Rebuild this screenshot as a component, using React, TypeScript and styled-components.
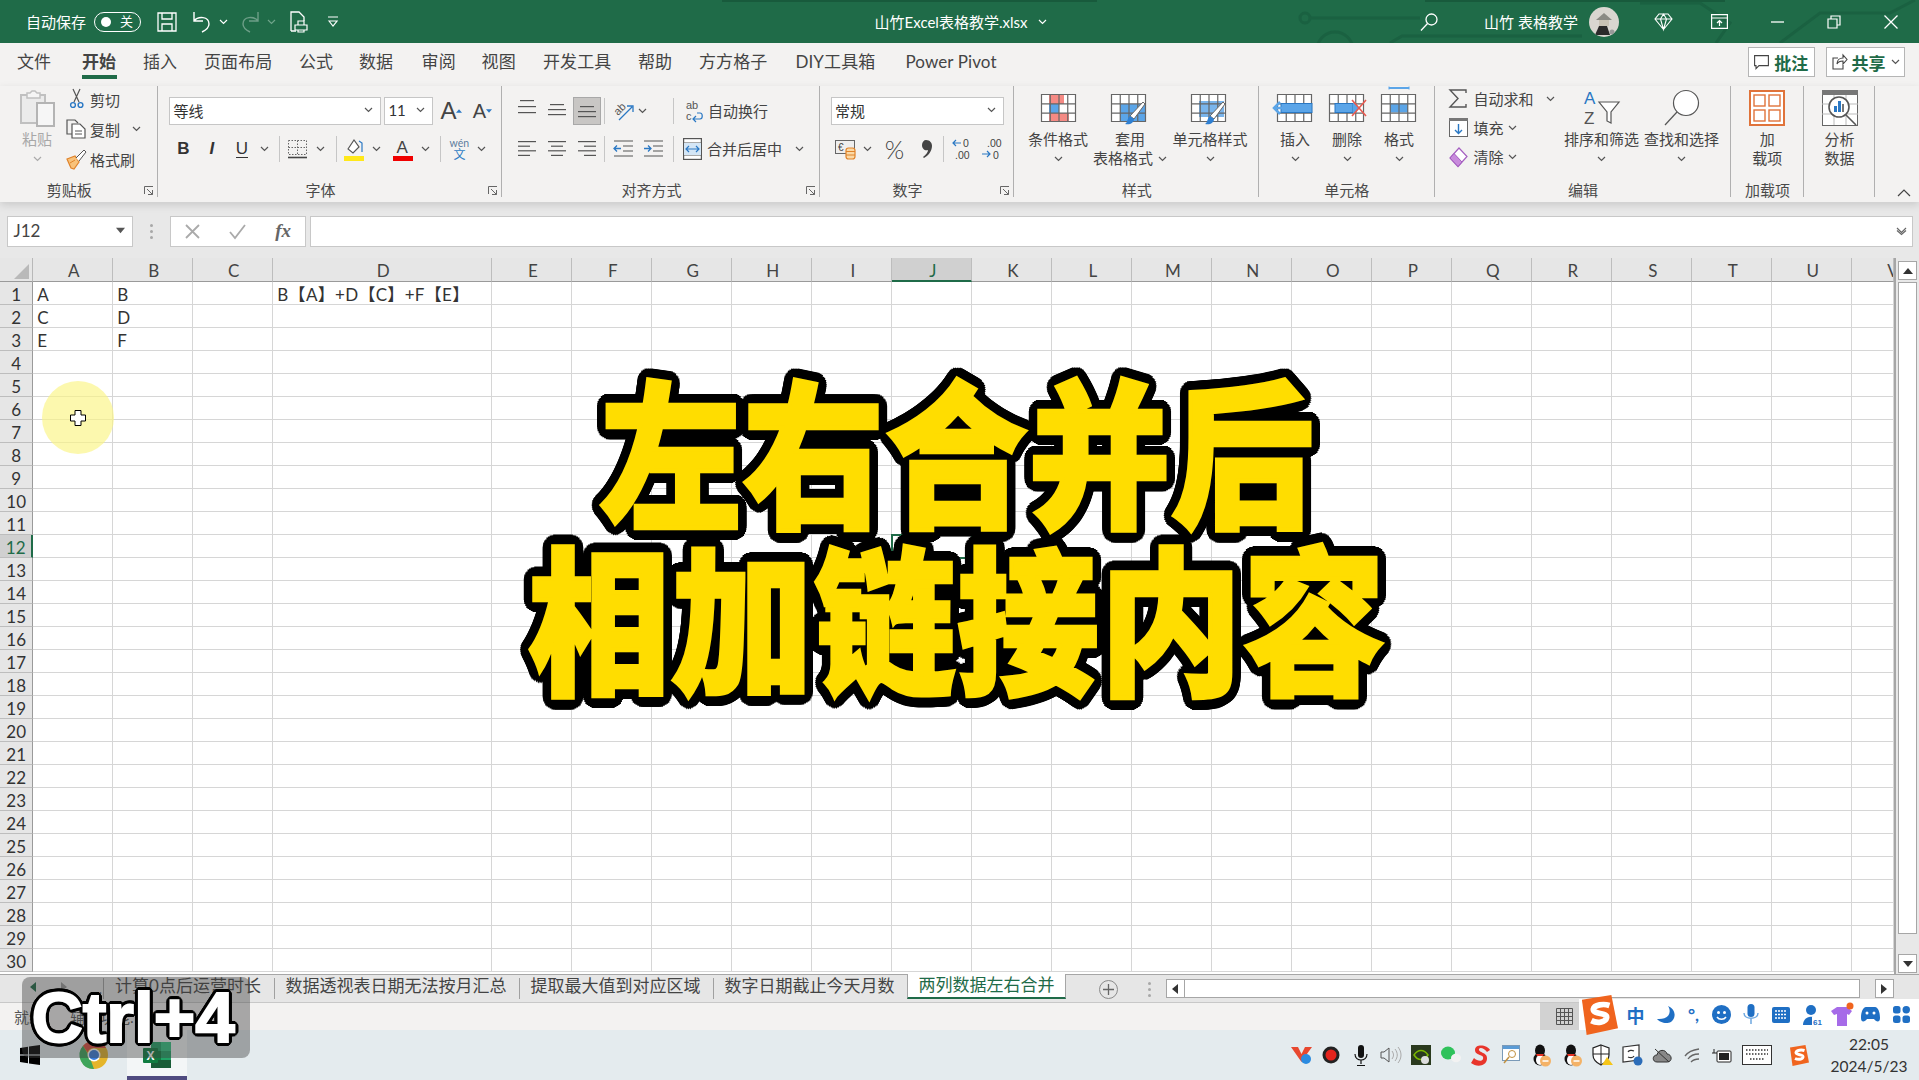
import React from 'react';
import styled, { createGlobalStyle } from 'styled-components';

const Global = createGlobalStyle`
  html, body { margin: 0; padding: 0; background: #fff; }
  * { box-sizing: border-box; }
  body { font-family: Lato, "Noto Sans CJK SC", sans-serif; color: #3c3c3c; overflow: hidden; }
`;

const ring = (r: number, n: number, c: string) =>
  Array.from({ length: n }, (_, i) => {
    const a = (2 * Math.PI * i) / n;
    return `${(r * Math.cos(a)).toFixed(1)}px ${(r * Math.sin(a)).toFixed(1)}px 0 ${c}`;
  }).join(',');
const headOutline = [ring(10.5, 36, '#000'), ring(6, 20, '#000'), ring(3, 12, '#000')].join(',');
const keyOutline = [ring(4, 20, '#000'), ring(2, 10, '#000')].join(',');

const Page = styled.div`
  position: relative; width: 1919px; height: 1080px; overflow: hidden;
  display: flex; flex-direction: column;
`;

/* ---------- shared ---------- */
const Svg = styled.svg`display: block; flex: none; overflow: visible;`;
const Chev = ({ c = '#555' }: { c?: string }) => (
  <Svg width="9" height="6" viewBox="0 0 9 6"><path d="M1 1l3.5 3.5L8 1" fill="none" stroke={c} strokeWidth="1.2" /></Svg>
);
const Place = styled.div<{ $ml?: number; $w?: number }>`
  margin-left: ${p => p.$ml ?? 0}px;
  ${p => (p.$w !== undefined ? `width: ${p.$w}px;` : '')}
  flex: none; display: flex; align-items: center; justify-content: center; white-space: nowrap;
`;

/* ---------- title bar ---------- */
const TitleBar = styled.header`
  position: relative; height: 43px; flex: none; background: #1f6b48; color: #fff;
  display: flex; align-items: center; font-size: 15px;
`;
const Pattern = styled.svg`position: absolute; inset: 0; pointer-events: none;`;
const TitleItem = styled(Place)`position: relative; font-weight: 400;`;
const Toggle = styled.div`
  width: 47px; height: 20px; border: 1.5px solid #fff; border-radius: 10px;
  display: flex; align-items: center; justify-content: space-between; padding: 0 7px 0 6px;
  font-size: 13px; line-height: 1;
`;
const ToggleDot = styled.i`width: 10px; height: 10px; border-radius: 50%; background: #fff;`;
const Avatar = styled.div`width: 30px; height: 30px; border-radius: 50%; background: #d9d6d0; overflow: hidden; display:flex;`;

/* ---------- tabs ---------- */
const TabRow = styled.nav`
  height: 43px; flex: none; background: #f3f2f1; display: flex; align-items: flex-start; padding-left: 17px;
`;
const Tab = styled.div<{ $w: number; $active?: boolean }>`
  position: relative; width: ${p => p.$w}px; height: 38px; line-height: 38px; font-size: 17px; flex: none;
  white-space: nowrap; color: #444; font-weight: ${p => (p.$active ? 700 : 400)}; letter-spacing: .1px;
  ${p => p.$active ? `&::after { content: ''; position: absolute; left: 0; width: 35px; height: 4px; top: 32px; background: #1f6b48; }` : ''}
`;
const TabActions = styled.div`margin-left: auto; display: flex; gap: 11px; padding: 4px 14px 0 0;`;
const ActionButton = styled.div<{ $w: number }>`
  width: ${p => p.$w}px; height: 30px; background: #fff; border: 1px solid #b5b5b5;
  display: flex; align-items: center; justify-content: center; gap: 5px;
  color: #1f6b48; font-weight: 700; font-size: 17px;
`;

/* ---------- ribbon ---------- */
const Ribbon = styled.section`
  position: relative; z-index: 2; height: 116px; flex: none; background: #f3f2f1; display: flex;
  box-shadow: 0 3px 8px rgba(0,0,0,.13);
`;
const Group = styled.div<{ $w: number }>`
  position: relative; width: ${p => p.$w}px; flex: none; display: flex; flex-direction: column;
  &::after { content: ''; position: absolute; right: 0; top: 0; height: 111px; width: 1px; background: #b0b0b0; }
`;
const GroupBody = styled.div<{ $pl: number }>`height: 93px; padding-left: ${p => p.$pl}px; display: flex;`;
const GroupFoot = styled.div`height: 23px; display: flex; align-items: center;`;
const GroupName = styled.div`flex: 1; text-align: center; font-size: 15px; line-height: 23px; color: #4a4a4a; font-weight: 400;`;
const Launcher = styled.div`width: 20px; display: flex; justify-content: flex-end; padding-right: 4px;`;
const ToolStack = styled.div`display: flex; flex-direction: column; gap: 10px; padding-top: 11px;`;
const ToolRow = styled.div`display: flex; align-items: center; height: 28px;`;
const Sep = styled.i<{ $ml?: number }>`
  display: flex; justify-content: center; width: 6px; height: 26px; flex: none; margin-left: ${p => p.$ml ?? 0}px;
  &::after { content: ''; width: 1px; background: #c6c6c6; }
`;
const Select = styled.div<{ $w: number; $ml?: number }>`
  width: ${p => p.$w}px; height: 28px; margin-left: ${p => p.$ml ?? 0}px; background: #fff; border: 1px solid #c6c6c6;
  display: flex; align-items: center; justify-content: space-between; padding: 0 7px 2px 3px; font-size: 15px; color: #333; flex: none; font-weight: 400;
`;
const SmallList = styled.div<{ $ml?: number; $h: number; $wd?: number }>`
  margin-left: ${p => p.$ml ?? 0}px; margin-top: -2px; display: flex; flex-direction: column;
  ${p => (p.$wd ? `width: ${p.$wd}px; flex: none;` : '')}
  & > div { height: ${p => p.$h}px; }
`;
const SmallCmd = styled.div`display: flex; align-items: center; font-size: 15px; color: #444; white-space: nowrap; font-weight: 400;`;
const SmallIcon = styled.div<{ $w: number }>`width: ${p => p.$w}px; flex: none; display: flex; justify-content: flex-start;`;
const BigCmd = styled.div<{ $w: number; $muted?: boolean }>`
  width: ${p => p.$w}px; flex: none; display: flex; flex-direction: column; align-items: center;
  font-size: 15px; line-height: 19px; color: ${p => (p.$muted ? '#a8a8a8' : '#444')}; font-weight: 400;
`;
const BigIcon = styled.div`height: 44px; display: flex; align-items: center; justify-content: center;`;
const BigLine = styled.div`height: 19px; display: flex; align-items: center; gap: 5px; white-space: nowrap;`;
const WrapText = styled(SmallCmd)<{ $ml: number }>`margin-left: ${p => p.$ml}px; padding-bottom: 2px;`;
const Collapse = styled.div`margin: 103px 0 0 22px;`;
const BoldGlyph = styled.span`font-family: "Liberation Sans", sans-serif; font-size: 17px; font-weight: 700; color: #333;`;
const ItalicGlyph = styled(BoldGlyph)`font-style: italic; font-weight: 700;`;
const UnderGlyph = styled(BoldGlyph)`font-weight: 400; border-bottom: 1.5px solid #333; line-height: 17px;`;
const GrowGlyph = styled.span<{ $s: number }>`font-family: "Liberation Sans", sans-serif; font-size: ${p => p.$s}px; color: #444; line-height: 1;`;
const Selected = styled.div`width: 28px; height: 28px; background: #c8c6c4; border: 1px solid #a8a8a8; display: flex; align-items: center; justify-content: center;`;
const Percent = styled.span`font-size: 25px; color: #444; font-weight: 300; line-height: 1;`;
const Ruby = styled.div`display: flex; flex-direction: column; align-items: center; line-height: 11px; font-size: 10.5px; color: #5e7d9e;`;
const RubyHan = styled.span`color: #2d7cc4; font-size: 12px; line-height: 12px;`;

/* ---------- formula bar ---------- */
const FormulaBar = styled.div`
  height: 56px; flex: none; background: #e8e8e8; padding: 13.7px 6px 0 6.5px; display: flex; align-items: flex-start;
`;
const NameBox = styled.div`
  width: 126px; height: 31px; background: #fff; border: 1px solid #c8c8c8; display: flex; align-items: center;
  justify-content: space-between; padding: 0 7px 2px 6px; font-size: 17px; color: #444; font-weight: 400;
`;
const Handle = styled.div`width: 37.5px; height: 31px; display: flex; flex-direction: column; gap: 3px; align-items: center; justify-content: center;
  & i { width: 3px; height: 3px; background: #a8a8a8; border-radius: 50%; }`;
const FxBox = styled.div`
  width: 136px; height: 31px; background: #fff; border: 1px solid #c8c8c8; display: flex; align-items: center; justify-content: space-between; padding: 0 14px 0 14px;
`;
const FxMark = styled.span`font-family: "Liberation Serif", serif; font-style: italic; font-weight: 700; font-size: 19px; color: #666;`;
const FormulaInput = styled.div`
  flex: 1; margin-left: 4px; height: 31px; background: #fff; border: 1px solid #c8c8c8; display: flex; align-items: center; justify-content: flex-end; padding-right: 5px;
`;

/* ---------- sheet ---------- */
const SheetWrap = styled.div`display: flex; height: 716px; flex: none; background: #e8e8e8;`;
const Sheet = styled.div`
  width: 1896px; height: 716px; flex: none; background: #fff; border-right: 2px solid #a6a6a6; overflow: hidden;
  display: grid; grid-template-columns: 33.3px repeat(3, 80px) 219px repeat(17, 80px) 42px;
  grid-template-rows: 23.7px repeat(30, 23px); align-content: start;
`;
const Corner = styled.div`background: #e6e6e6; border-right: 1px solid #b8b8b8; border-bottom: 1px solid #9a9a9a; display: flex; align-items: flex-end; justify-content: flex-end; padding: 0 3px 2px 0;`;
const ColHead = styled.div<{ $sel?: boolean; $clip?: boolean }>`
  background: ${p => (p.$sel ? '#d0d0d0' : '#e6e6e6')};
  border-right: 1px solid #bdbdbd;
  border-bottom: ${p => (p.$sel ? '2px solid #1f6b48' : '1px solid #9a9a9a')};
  display: flex; align-items: center; overflow: hidden; white-space: nowrap;
  justify-content: ${p => (p.$clip ? 'flex-start' : 'center')}; padding: 3px 0 0 ${p => (p.$clip ? 35 : 2)}px;
  font-size: 17px; color: ${p => (p.$sel ? '#1f6b48' : '#444')}; line-height: 1; font-weight: 400;
`;
const RowHead = styled.div<{ $sel?: boolean }>`
  background: ${p => (p.$sel ? '#d0d0d0' : '#e6e6e6')};
  border-right: ${p => (p.$sel ? '2px solid #1f6b48' : '1px solid #9a9a9a')};
  border-bottom: 1px solid #bdbdbd; display: flex; align-items: center; justify-content: center; padding-top: 3px;
  font-size: 17px; color: ${p => (p.$sel ? '#1f6b48' : '#333')}; line-height: 1; font-weight: 400;
`;
const Cell = styled.div<{ $sel?: boolean }>`
  border-right: 1px solid #d6d6d6; border-bottom: 1px solid #d6d6d6; padding-left: 4px;
  font-size: 17px; line-height: 25px; color: #333; white-space: nowrap; font-weight: 400; letter-spacing: .3px;
  ${p => (p.$sel ? 'outline: 2px solid #1f6b48; outline-offset: -1px;' : '')}
`;
const VScroll = styled.div`width: 23px; height: 716px; padding: 3px 2px 0 2px; display: flex; flex-direction: column; align-items: flex-start;`;
const ScrollBtn = styled.div`width: 19px; height: 19px; flex: none; background: #fff; border: 1px solid #a6a6a6; display: flex; align-items: center; justify-content: center;`;
const Thumb = styled.div`width: 19px; height: 652px; margin-top: 2px; flex: none; background: #fff; border: 1px solid #a6a6a6;`;
const DownBtn = styled(ScrollBtn)`margin-top: 20px;`;

/* ---------- sheet tabs ---------- */
const TabBar = styled.div`
  height: 29px; flex: none; background: #e6e6e6; border-top: 1px solid #a6a6a6; border-bottom: 1px solid #c8c8c8;
  display: flex; align-items: flex-start;
`;
const TabNav = styled.div`width: 103px; height: 24px; flex: none; display: flex; align-items: center; padding-left: 28px; gap: 21px; color: #555;`;
const SheetTab = styled.div<{ $w: number; $active?: boolean }>`
  position: relative; width: ${p => p.$w}px; height: ${p => (p.$active ? 25 : 24)}px; flex: none; font-size: 17px; line-height: 21px;
  display: flex; align-items: center; justify-content: center; white-space: nowrap; font-weight: 400; padding-bottom: 3px;
  ${p => p.$active
    ? 'background:#fff;color:#1f6b48;border-bottom:2px solid #1f6b48;border-left:1px solid #a6a6a6;border-right:1px solid #a6a6a6;margin-top:-1px;'
    : 'color:#444; padding-right: 2px;'}
`;
const TabDivider = styled.i`width: 1px; height: 21px; margin-top: 3px; background: #a0a0a0; flex: none;`;
const AddSheet = styled.div`
  width: 19px; height: 19px; margin: 5px 0 0 33px; border: 1.3px solid #8a8a8a; border-radius: 50%; flex: none;
  display: flex; align-items: center; justify-content: center; color: #666;
`;
const BarHandle = styled(Handle)`width: 3px; height: 19px; margin: 5px 0 0 29.5px; flex: none;`;
const HScroll = styled.div`margin: 4px 0 0 15px; display: flex; align-items: stretch; height: 19px; flex: none;`;
const HTrack = styled.div`width: 675px; background: #fff; border: 1px solid #a6a6a6; border-left: 0;`;
const HBtn = styled.div<{ $ml?: number }>`width: 19px; margin-left: ${p => p.$ml ?? 0}px; background: #fff; border: 1px solid #a6a6a6; display: flex; align-items: center; justify-content: center;`;

/* ---------- status + taskbar ---------- */
const StatusBar = styled.div`
  position: relative; height: 27px; flex: none; background: #f3f2f1; display: flex; align-items: center; padding-left: 14px; font-size: 15px; color: #555; font-weight: 400;
`;
const StatusNote = styled.span`margin-left: 26px; display:flex; align-items:center; gap:6px;`;
const ViewCell = styled.div`position: absolute; top: 0; bottom: 0; left: 1540px; width: 50px; background: #d2d2d2; display: flex; align-items: center; padding-left: 16px;`;
const ImeBar = styled.div`
  position: absolute; left: 1579px; right: 0; top: 999px; height: 31px; background: #fff; display: flex; align-items: center; z-index: 3; color: #1f6fc4;
`;
const ImeZh = styled.span`font-size: 18px; font-weight: 700; color: #1f6fc4;`;
const ImeMark = styled.span`font-size: 17px; font-weight: 700; color: #1f6fc4;`;
const Taskbar = styled.footer`flex: 1; background: #e4ebee; display: flex; align-items: center;`;
const ExcelTile = styled.div`width: 60.5px; height: 50px; margin-left: 18.5px; background: #f3f6f7; border-bottom: 4px solid #4f4b80; display: flex; align-items: center; justify-content: center; padding-top: 3px;`;
const Clock = styled.div`margin-left: 23px; width: 74px; display: flex; flex-direction: column; align-items: center; font-size: 15.5px; line-height: 22.5px; color: #333; white-space: nowrap;`;

/* ---------- overlays ---------- */
const Headline = styled.div`
  position: absolute; left: -2px; width: 1919px; top: 354px; z-index: 5; text-align: center;
  font-family: "Noto Sans CJK SC", sans-serif; font-weight: 900; font-size: 141px; line-height: 166px;
  color: #ffdd00; -webkit-text-stroke: 4px #ffdd00; text-shadow: ${headOutline};
  letter-spacing: 2px; pointer-events: none; white-space: nowrap; transform: scaleY(1.12); transform-origin: 50% 0;
`;
const HeadLine2 = styled.div`margin-top: -17px;`;
const KeyHint = styled.div`
  position: absolute; left: 22.4px; top: 976.7px; width: 228px; height: 81px; z-index: 6; border-radius: 8px;
  background: rgba(62,62,62,.42); display: flex; align-items: center; padding-left: 9px;
  font-family: "Liberation Sans", sans-serif; font-weight: 700; font-size: 71px; line-height: 1; color: #fff;
  -webkit-text-stroke: 2px #fff; text-shadow: ${keyOutline};
`;
const Spot = styled.div`
  position: absolute; left: 42px; top: 381px; width: 72px; height: 73px; border-radius: 50%; z-index: 4;
  background: rgba(250,245,130,.65); display: flex; align-items: center; justify-content: center;
`;

/* ---------- icons ---------- */
const Paste = () => (
  <Svg width="35" height="37" viewBox="0 0 35 37">
    <path d="M1 5h24v28H1z" fill="#ebebeb" stroke="#c0c0c0" strokeWidth="2" />
    <path d="M7 8V3h3l2-2h3l2 2h3v5z" fill="#f5f5f5" stroke="#c0c0c0" strokeWidth="1.5" />
    <rect x="17" y="13" width="17" height="23" fill="#f6f6f6" stroke="#b4b4b4" strokeWidth="2" />
  </Svg>
);
const ScissorsI = () => (
  <Svg width="14" height="20" viewBox="0 0 14 20">
    <path d="M3 0l6 13M10 0L4 13" stroke="#555" strokeWidth="1.2" fill="none" />
    <circle cx="3" cy="16" r="2.4" fill="none" stroke="#2a78c4" strokeWidth="1.4" />
    <circle cx="10.5" cy="16" r="2.4" fill="none" stroke="#2a78c4" strokeWidth="1.4" />
  </Svg>
);
const CopyI = () => (
  <Svg width="20" height="20" viewBox="0 0 20 20">
    <path d="M6 15H1V1h8l3 3" fill="none" stroke="#555" strokeWidth="1.2" />
    <path d="M6 5h8l5 5v9H6z" fill="#fff" stroke="#555" strokeWidth="1.2" />
    <path d="M9 12h7M9 15h7" stroke="#555" />
  </Svg>
);
const BrushI = () => (
  <Svg width="21" height="20" viewBox="0 0 21 20">
    <path d="M1 10l8-3 4 6-5 7-3-1z" fill="#f8c27a" stroke="#e0832a" strokeWidth="1.2" />
    <path d="M10 9l8-8 2 2-7 9" fill="#fff" stroke="#555" />
    <path d="M4 14l5-3" stroke="#e0832a" />
  </Svg>
);
const Lines = ({ kind, y = 1 }: { kind: 'l' | 'c' | 'r' | 'top' | 'mid' | 'bot'; y?: number }) => {
  const d: Record<string, [number, number][]> = {
    l: [[0, 18], [0, 12], [0, 18], [0, 12]], c: [[0, 18], [3, 12], [0, 18], [3, 12]], r: [[0, 18], [6, 12], [0, 18], [6, 12]],
    top: [[2, 14], [0, 18], [0, 18]], mid: [[2, 14], [0, 18], [0, 18]], bot: [[2, 14], [0, 18], [0, 18]],
  };
  const gap = kind === 'top' ? 6 : kind === 'mid' ? 5 : kind === 'bot' ? 5 : 4.6;
  return (
    <Svg width="18" height="18" viewBox="0 0 18 18">
      {d[kind].map(([x, w], i) => <rect key={i} x={x} y={y + i * gap} width={w} height="1.2" fill="#555" />)}
    </Svg>
  );
};
const Orient = () => (
  <Svg width="20" height="20" viewBox="0 0 20 20">
    <text x="1" y="12" fontSize="11" fill="#555" transform="rotate(-45 6 10)" fontFamily="Liberation Sans">ab</text>
    <path d="M5 19L18 6M13 5h6v6" fill="none" stroke="#2a78c4" strokeWidth="1.3" />
  </Svg>
);
const Indent = ({ out }: { out?: boolean }) => (
  <Svg width="19" height="18" viewBox="0 0 19 18">
    <path d="M0 1h19M9 6h10M9 11h10M0 16h19" stroke="#555" strokeWidth="1.2" />
    {out ? <path d="M7 8.500H0M3 5.500l-3 3 3 3" fill="none" stroke="#2a78c4" strokeWidth="1.3" /> : <path d="M0 8.500h7M4 5.500l3 3-3 3" fill="none" stroke="#2a78c4" strokeWidth="1.3" />}
  </Svg>
);
const WrapI = () => (
  <Svg width="18" height="22" viewBox="0 0 18 22">
    <text x="0" y="9" fontSize="11" fill="#555" fontFamily="Liberation Sans">ab</text>
    <text x="0" y="20" fontSize="11" fill="#555" fontFamily="Liberation Sans">c</text>
    <path d="M7 19h7c3 0 3-6 0-6h-3M10 16l-3 3 3 3" fill="none" stroke="#2a78c4" strokeWidth="1.2" />
  </Svg>
);
const MergeI = () => (
  <Svg width="19" height="22" viewBox="0 0 19 22">
    <rect x=".6" y=".6" width="17.800" height="20.800" fill="#fff" stroke="#555" strokeWidth="1.2" />
    <path d="M.6 5h18M.6 17h18" stroke="#555" />
    <rect x="1" y="5" width="17" height="12" fill="#d4e6f6" />
    <path d="M3 11h13M6 8l-3 3 3 3M13 8l3 3-3 3" fill="none" stroke="#2a78c4" strokeWidth="1.2" />
  </Svg>
);
const CurrencyI = () => (
  <Svg width="21" height="22" viewBox="0 0 21 22">
    <rect x=".5" y="2.500" width="19" height="13" fill="#eee" stroke="#666" />
    <text x="3" y="13" fontSize="10" fontFamily="Liberation Sans" fill="#444">{'€'}</text>
    <rect x="11" y="10" width="9" height="11" rx="2.500" fill="#fbd9a6" stroke="#e0832a" strokeWidth="1.2" />
    <path d="M11 13.500h9M11 17h9" stroke="#e0832a" />
  </Svg>
);
const Comma = () => (
  <Svg width="11" height="20" viewBox="0 0 11 20"><path d="M5 1c4 0 6 3 6 6 0 5-4 10-8 12l-1-1c3-2 5-5 5-7-3 1-6-1-6-5C1 3 3 1 5 1z" fill="#444" /></Svg>
);
const DecI = ({ more }: { more?: boolean }) => (
  <Svg width="19" height="22" viewBox="0 0 19 22">
    {more ? (<>
      <text x="5" y="9" fontSize="10.5" fill="#444" fontFamily="Liberation Sans">.00</text>
      <text x="11" y="20.500" fontSize="10.5" fill="#444" fontFamily="Liberation Sans">0</text>
      <path d="M0 16h8M5 13l3 3-3 3" fill="none" stroke="#2a78c4" strokeWidth="1.2" />
    </>) : (<>
      <text x="11" y="9" fontSize="10.5" fill="#444" fontFamily="Liberation Sans">0</text>
      <text x="3" y="20.500" fontSize="10.5" fill="#444" fontFamily="Liberation Sans">.00</text>
      <path d="M9 5H1M4 2L1 5l3 3" fill="none" stroke="#2a78c4" strokeWidth="1.2" />
    </>)}
  </Svg>
);
const BordersI = () => (
  <Svg width="19" height="19" viewBox="0 0 19 19">
    <path d="M.5.500h18v14H.5zM9.500.500v14M.5 7.500h18" fill="none" stroke="#666" strokeDasharray="1.500 1.500" />
    <path d="M0 17.500h19" stroke="#444" strokeWidth="1.6" />
  </Svg>
);
const FillI = () => (
  <Svg width="20" height="23" viewBox="0 0 20 23">
    <path d="M4 11l6-9 5 7-6 6z" fill="#fff" stroke="#555" strokeWidth="1.2" />
    <path d="M15 3l3 2v9" stroke="#2a78c4" strokeWidth="1.2" fill="none" />
    <rect x="0" y="18" width="20" height="5" fill="#ffe81a" />
  </Svg>
);
const FontColorI = () => (
  <Svg width="20" height="23" viewBox="0 0 20 23">
    <text x="3.500" y="15" fontSize="17" fill="#444" fontFamily="Liberation Sans">A</text>
    <rect x="0" y="18" width="20" height="5" fill="#f00000" />
  </Svg>
);
const Grid3 = ({ w = 35, h = 28 }: { w?: number; h?: number }) => {
  const c = w / 4, r = h / 3;
  return <>{[0, 1, 2, 3, 4].map(i => <path key={'v' + i} d={`M${Math.min(i * c, w - 1) + .5} 0V${h}`} stroke="#666" strokeWidth="1.2" />)}
    {[0, 1, 2, 3].map(i => <path key={'h' + i} d={`M0 ${Math.min(i * r, h - 1) + .5}H${w}`} stroke="#666" strokeWidth="1.2" />)}</>;
};
const CondI = () => (
  <Svg width="35" height="28" viewBox="0 0 35 28">
    <rect width="35" height="28" fill="#fff" /><rect x="8" y="1" width="15" height="9" fill="#f58a84" /><rect x="8" y="10" width="10" height="9" fill="#5ba5e8" />
    <rect x="8" y="19" width="20" height="9" fill="#f58a84" /><Grid3 />
  </Svg>
);
const Brush = ({ x, y }: { x: number; y: number }) => (
  <g transform={`translate(${x} ${y})`}>
    <path d="M18 0l2 2-11 15-4-3z" fill="#fff" stroke="#666" />
    <path d="M5 14l4 3c0 4-4 6-9 5 3-2 2-6 5-8z" fill="#2f7fd1" />
  </g>
);
const TableStyleI = () => (
  <Svg width="38" height="28" viewBox="0 0 38 28">
    <rect width="35" height="28" fill="#fff" /><rect x="9" y="10" width="26" height="18" fill="#5ba5e8" /><Grid3 /><Brush x={14} y={8} />
  </Svg>
);
const CellStyleI = () => (
  <Svg width="38" height="28" viewBox="0 0 38 28">
    <rect width="35" height="28" fill="#fff" /><rect x="8" y="7" width="25" height="16" fill="#7ab5ec" /><Grid3 /><Brush x={14} y={8} />
  </Svg>
);
const InsertI = () => (
  <Svg width="36" height="28" viewBox="0 0 36 28">
    <rect width="35" height="28" fill="#fff" /><Grid3 /><rect x="4" y="9.500" width="31" height="9" fill="#5ba5e8" stroke="#2a78c4" />
    <path d="M20 14H-3M3 8l-6 6 6 6" fill="none" stroke="#5ba5e8" strokeWidth="2.500" />
  </Svg>
);
const DeleteI = () => (
  <Svg width="37" height="28" viewBox="0 0 37 28">
    <rect width="35" height="28" fill="#fff" /><Grid3 /><rect x="6" y="9.500" width="18" height="9" fill="#5ba5e8" stroke="#2a78c4" />
    <path d="M24 8l6 6-6 6z" fill="#5ba5e8" /><path d="M23 6l14 16M37 6L23 22" stroke="#ea5a50" strokeWidth="1.6" />
  </Svg>
);
const FormatI = () => (
  <Svg width="36" height="28" viewBox="0 0 36 28">
    <path d="M8 -6h20" stroke="#5ba5e8" strokeWidth="2" /><path d="M8 -7.500v3M28 -7.500v3" stroke="#5ba5e8" />
    <rect width="35" height="28" fill="#fff" /><rect x="9" y="9.500" width="18" height="9" fill="#5ba5e8" /><Grid3 />
  </Svg>
);
const SigmaI = () => (
  <Svg width="18" height="19" viewBox="0 0 18 19"><path d="M17 4V1H1l8 8.500L1 18h16v-3" fill="none" stroke="#555" strokeWidth="1.4" /></Svg>
);
const FillDown = () => (
  <Svg width="19" height="19" viewBox="0 0 19 19">
    <rect x=".5" y=".5" width="18" height="18" fill="#fff" stroke="#666" /><rect x="0" y="0" width="19" height="3" fill="#777" />
    <path d="M9.500 6v9M6 12l3.500 3.500L13 12" fill="none" stroke="#2a78c4" strokeWidth="1.4" />
  </Svg>
);
const EraserI = () => (
  <Svg width="19" height="20" viewBox="0 0 19 20">
    <path d="M10 1l8 8.500-9 10L1 11z" fill="#fff" stroke="#a45ec0" strokeWidth="1.2" /><path d="M1 11l4-4.500 8 8.500-4 4.500z" fill="#c88bdc" stroke="#a45ec0" />
  </Svg>
);
const SortI = () => (
  <Svg width="36" height="34" viewBox="0 0 36 34">
    <text x="0" y="13" fontSize="17" fill="#2a78c4" fontFamily="Liberation Sans">A</text>
    <text x="0" y="33" fontSize="17" fill="#555" fontFamily="Liberation Sans">Z</text>
    <path d="M15 11h20l-8 10v11l-4-2v-9z" fill="#fff" stroke="#555" strokeWidth="1.2" />
  </Svg>
);
const FindI = () => (
  <Svg width="36" height="36" viewBox="0 0 36 36">
    <circle cx="22" cy="13" r="12.500" fill="#fff" stroke="#555" strokeWidth="1.2" /><path d="M13 22L1 35" stroke="#555" strokeWidth="1.2" />
  </Svg>
);
const AddinI = () => (
  <Svg width="36" height="36" viewBox="0 0 36 36">
    <rect x="1" y="1" width="34" height="34" fill="#fff" stroke="#e0733a" strokeWidth="2" />
    {[[5, 5], [20, 5], [5, 20], [20, 20]].map(([x, y]) => <rect key={x + '-' + y} x={x} y={y} width="11" height="11" fill="none" stroke="#e0733a" strokeWidth="1.4" />)}
  </Svg>
);
const AnalyzeI = () => (
  <Svg width="36" height="36" viewBox="0 0 36 36">
    <rect x=".5" y=".5" width="35" height="35" fill="#fff" stroke="#666" /><rect width="36" height="5" fill="#777" />
    <path d="M0 14h36M0 24h36M12 5v30M24 5v30" stroke="#bbb" />
    <circle cx="17" cy="17" r="10" fill="#fff" stroke="#555" strokeWidth="1.6" /><rect x="12" y="16" width="3" height="6" fill="#2a78c4" /><rect x="16" y="11" width="3" height="11" fill="#2a78c4" /><rect x="20" y="14" width="2" height="8" fill="#777" />
    <path d="M24 25l10 10" stroke="#555" strokeWidth="1.6" />
  </Svg>
);
const LauncherI = () => (
  <Svg width="10" height="10" viewBox="0 0 10 10"><path d="M.5 8V.5H9M3 3l5.500 5.500M8.500 4v4.500H4" fill="none" stroke="#666" /></Svg>
);
const W = '#fff';
const SaveI = () => (
  <Svg width="20" height="20" viewBox="0 0 20 20"><path d="M1 1h18v18H1zM5 1v6h10V1M5 19v-7h10v7" fill="none" stroke={W} strokeWidth="1.3" /></Svg>
);
const UndoI = ({ flip, o = 1 }: { flip?: boolean; o?: number }) => (
  <Svg width="18" height="22" viewBox="0 0 18 22" opacity={o} style={flip ? { transform: 'scaleX(-1)' } : undefined}>
    <path d="M1 1v9h9M1 10c4-5 15-5 15 3 0 4-3 6-7 8" fill="none" stroke={W} strokeWidth="1.4" />
  </Svg>
);
const PreviewI = () => (
  <Svg width="18" height="21" viewBox="0 0 18 21"><path d="M1 20V1h8l5 5v4M1 20h5" fill="none" stroke={W} strokeWidth="1.3" /><path d="M5 14h12v5H5zM8 14v-4h6v4M8 19v2h6v-2" fill="none" stroke={W} strokeWidth="1.2" /></Svg>
);
const CustomI = () => (
  <Svg width="10" height="12" viewBox="0 0 10 12"><path d="M0 1h10M1 5l4 5 4-5z" fill="none" stroke={W} strokeWidth="1.2" /></Svg>
);
const SearchI = () => (
  <Svg width="18" height="18" viewBox="0 0 18 18"><circle cx="11.500" cy="6.500" r="5.500" fill="none" stroke={W} strokeWidth="1.3" /><path d="M7.500 10.500L1 17.500" stroke={W} strokeWidth="1.3" /></Svg>
);
const DiamondI = () => (
  <Svg width="17" height="17" viewBox="0 0 17 17"><path d="M4 1h9l4 5-8.500 10.500L0 6zM0 6h17M5.500 6l3 10.500 3-10.500M5.500 6L8.500 1l3 5" fill="none" stroke={W} strokeWidth="1.1" /></Svg>
);
const DisplayI = () => (
  <Svg width="17" height="15" viewBox="0 0 17 15"><path d="M.6.600h15.800v13.800H.6zM.6 4h15.800M8.500 12V6.500M6 9l2.500-2.500L11 9" fill="none" stroke={W} strokeWidth="1.2" /></Svg>
);
const MinI = () => <Svg width="13" height="2" viewBox="0 0 13 2"><path d="M0 1h13" stroke={W} strokeWidth="1.3" /></Svg>;
const RestoreI = () => <Svg width="14" height="14" viewBox="0 0 14 14"><path d="M1 4h9v9H1zM4 4V1h9v9h-3" fill="none" stroke={W} strokeWidth="1.2" /></Svg>;
const CloseI = () => <Svg width="14" height="14" viewBox="0 0 14 14"><path d="M.5.500l13 13M13.500.500l-13 13" stroke={W} strokeWidth="1.3" /></Svg>;
const AvatarArt = () => (
  <Svg width="30" height="30" viewBox="0 0 30 30">
    <path d="M7 13l8-7 8 7z" fill="#8a8a84" /><path d="M10 13h10v6H10z" fill="#c8c2b4" />
    <path d="M6 28l4-9h8l3 9z" fill="#2a2a2a" /><circle cx="23" cy="25" r="2.500" fill="#999" />
  </Svg>
);
const CommentI = () => <Svg width="15" height="15" viewBox="0 0 15 15"><path d="M.6.600h13.800v10H5l-3 3v-3H.6z" fill="none" stroke="#444" strokeWidth="1.100" /></Svg>;
const ShareI = () => <Svg width="15" height="16" viewBox="0 0 15 16"><path d="M6 4H1v11h10v-4M5 10c0-4 3-6 6-6V1l4 4.500L11 10V7c-3 0-5 1-6 3z" fill="none" stroke="#444" strokeWidth="1.100" /></Svg>;
const Tri = ({ dir, s = 10, c = '#333' }: { dir: 'u' | 'd' | 'l' | 'r'; s?: number; c?: string }) => {
  const d = { u: 'M0 8h10L5 2z', d: 'M0 2h10L5 8z', l: 'M8 0v10L2 5z', r: 'M2 0v10l6-5z' }[dir];
  return <Svg width={s} height={s} viewBox="0 0 10 10"><path d={d} fill={c} /></Svg>;
};
const WinI = () => <Svg width="20" height="20" viewBox="0 0 20 20"><path d="M0 3l8-1.200V9.500H0zM9 1.600L20 0v9.500H9zM0 10.500h8v7.700L0 17zM9 10.500h11V20L9 18.400z" fill="#000" /></Svg>;
const ChromeI = () => (
  <Svg width="28" height="28" viewBox="0 0 28 28">
    <circle cx="14" cy="14" r="14" fill="#e5b52a" />
    <path d="M14 0a14 14 0 0 1 12.100 7H14a7 7 0 0 0-6.500 4.300L3 4.800A14 14 0 0 1 14 0z" fill="#dd4b3e" />
    <path d="M3 4.800l6.500 11L14 28A14 14 0 0 1 3 4.800z" fill="#3da45a" />
    <circle cx="14" cy="14" r="6.500" fill="#fff" /><circle cx="14" cy="14" r="5" fill="#3a7ddc" />
  </Svg>
);
const ExcelI = () => (
  <Svg width="28" height="28" viewBox="0 0 28 28">
    <rect x="8" y="1" width="20" height="26" rx="1.500" fill="#21a366" /><rect x="18" y="1" width="10" height="9" fill="#33c481" /><rect x="8" y="10" width="10" height="9" fill="#107c41" /><rect x="8" y="19" width="20" height="8" fill="#185c37" />
    <rect x="0" y="7" width="15" height="15" rx="1" fill="#107c41" />
    <text x="3.500" y="18.500" fontSize="12" fontWeight="700" fill="#fff" fontFamily="Liberation Sans">X</text>
  </Svg>
);
const tray: { ml: number; node: React.ReactNode }[] = [
  { ml: 1104, node: <Svg width="21" height="20" viewBox="0 0 21 20"><path d="M0 2h7l3.500 7L14 2h7l-8 11-2.500 4z" fill="#e8482f" /><circle cx="15" cy="14" r="5" fill="#2b8be0" /></Svg> },
  { ml: 10, node: <Svg width="18" height="18" viewBox="0 0 18 18"><circle cx="9" cy="9" r="8.500" fill="#222" /><circle cx="9" cy="9" r="5.500" fill="#e4231c" /></Svg> },
  { ml: 14.5, node: <Svg width="12" height="21" viewBox="0 0 12 21"><rect x="3" y="0" width="6" height="13" rx="3" fill="#111" /><path d="M0 9c0 8 12 8 12 0M6 15v4M2 20.500h8" fill="none" stroke="#111" strokeWidth="1.2" /></Svg> },
  { ml: 14.5, node: <Svg width="20" height="16" viewBox="0 0 20 16"><path d="M0 5h3l5-4v14l-5-4H0z" fill="none" stroke="#555" strokeWidth="1" /><path d="M11 4c2 3 2 5 0 8M14 2c3 4 3 8 0 12M17 0c4 5 4 11 0 16" fill="none" stroke="#aaa" /></Svg> },
  { ml: 9.5, node: <Svg width="20" height="20" viewBox="0 0 20 20"><rect width="20" height="20" fill="#2a3a1e" /><path d="M3 10c4-6 10-6 14 0-4 6-10 6-14 0z" fill="none" stroke="#7ab800" strokeWidth="1.500" /><circle cx="14" cy="15" r="4" fill="#ddd" /></Svg> },
  { ml: 10, node: <Svg width="20" height="18" viewBox="0 0 20 18"><ellipse cx="7" cy="7" rx="7" ry="6.500" fill="#2fc25b" /><ellipse cx="15" cy="12" rx="5" ry="4.200" fill="#f2f2f2" /></Svg> },
  { ml: 10, node: <Svg width="20" height="22" viewBox="0 0 20 22"><path d="M19 6C17 1 4-1 4 6c0 6 10 4 8 9-1 3-6 2-9-1l-3 5c5 4 15 4 16-4 1-7-9-6-8-10 1-2 5-1 8 3z" fill="#e8352b" /></Svg> },
  { ml: 11, node: <Svg width="18" height="20" viewBox="0 0 18 20"><rect x=".5" y=".5" width="17" height="15" fill="#fff" stroke="#7a9ab8" /><rect x="1" y="1" width="16" height="3" fill="#5b9bd5" /><circle cx="10" cy="9" r="3.500" fill="none" stroke="#c09040" /><path d="M7 12l-5 6" stroke="#c09040" strokeWidth="1.500" /></Svg> },
  { ml: 13, node: <Penguin /> },
  { ml: 13, node: <Penguin /> },
  { ml: 10, node: <Svg width="21" height="22" viewBox="0 0 21 22"><path d="M9 1l8 3v7c0 5-4 8-8 10-4-2-8-5-8-10V4z" fill="#fff" stroke="#222" strokeWidth="1.200" /><path d="M9 1v20M1 10h16" stroke="#222" /><path d="M15 13l6 8H10z" fill="#f5c518" /></Svg> },
  { ml: 9, node: <Svg width="21" height="22" viewBox="0 0 21 22"><path d="M1 3l16-2v15L1 18z" fill="#fff" stroke="#333" strokeWidth="1.200" /><path d="M6 8c1-2 4-2 6-1M12 12c-1 2-4 2-6 1" fill="none" stroke="#333" strokeWidth="1.200" /><circle cx="16" cy="17" r="4.500" fill="#2b6cb8" /></Svg> },
  { ml: 9.5, node: <Svg width="20" height="15" viewBox="0 0 20 15"><path d="M5 14C0 14 0 7 5 7c1-6 9-6 10-1 5 0 6 8 0 8z" fill="#888" stroke="#333" /><path d="M3 1l14 13" stroke="#333" /></Svg> },
  { ml: 12, node: <Svg width="16" height="17" viewBox="0 0 16 17"><path d="M1 9c3-4 7-6 14-7M4 12c2-3 6-5 11-5M7 15c2-2 4-3 8-3" fill="none" stroke="#666" strokeWidth="1.300" /></Svg> },
  { ml: 12, node: <Svg width="19" height="15" viewBox="0 0 19 15"><rect x="5" y="3" width="14" height="11" rx="1" fill="#fff" stroke="#222" /><rect x="7" y="5" width="10" height="7" fill="#222" /><path d="M0 5h5M2 1v4" stroke="#222" /></Svg> },
  { ml: 11, node: <Svg width="30" height="20" viewBox="0 0 30 20"><rect x=".5" y=".5" width="29" height="19" fill="#fff" stroke="#333" /><path d="M4 5h22M4 9h22M8 14h14" stroke="#333" strokeDasharray="1.500 1.500" strokeWidth="1.300" /></Svg> },
  { ml: 17, node: <SogouMark s={20} /> },
];
function Penguin() {
  return (
    <Svg width="18" height="23" viewBox="0 0 18 23">
      <ellipse cx="7" cy="6.500" rx="5" ry="6" fill="#111" /><ellipse cx="7" cy="15" rx="6.500" ry="6.500" fill="#111" /><ellipse cx="7" cy="16" rx="4" ry="5" fill="#fff" />
      <path d="M3 10h8l-1 2H4z" fill="#e63222" /><circle cx="12.500" cy="17" r="5.500" fill="#f4b266" /><path d="M9.500 17h6" stroke="#fff" strokeWidth="1.500" />
    </Svg>
  );
}
function SogouMark({ s }: { s: number }) {
  return (
    <Svg width={s} height={s * 1.05} viewBox="0 0 40 42">
      <path d="M2 5L33 0l7 35-33 7z" fill="#f0641e" />
      <path d="M31 11c-6-2-16-1-17 4 0 6 15 3 14 9-1 5-10 6-16 3" fill="none" stroke="#fff" strokeWidth="6" />
    </Svg>
  );
}
const IC = '#1f6fc4';
const ime: { ml: number; node: React.ReactNode }[] = [
  { ml: 7.4, node: <ImeZh>中</ImeZh> },
  { ml: 12.5, node: <Svg width="18" height="18" viewBox="0 0 18 18"><path d="M11 0c4 6 1 14-11 13 3 4 14 7 17-1 2-5-1-10-6-12z" fill={IC} /></Svg> },
  { ml: 13, node: <ImeMark>°,</ImeMark> },
  { ml: 13, node: <Svg width="19" height="19" viewBox="0 0 19 19"><circle cx="9.500" cy="9.500" r="9.500" fill={IC} /><circle cx="6.500" cy="7.500" r="1.500" fill="#fff" /><circle cx="12.500" cy="7.500" r="1.500" fill="#fff" /><path d="M5 12c2 3 7 3 9 0" fill="none" stroke="#fff" strokeWidth="1.500" /></Svg> },
  { ml: 13, node: <Svg width="14" height="21" viewBox="0 0 14 21"><rect x="3.500" width="7" height="13" rx="3.500" fill={IC} /><path d="M0 9c0 7 14 7 14 0M7 15v5" fill="none" stroke="#6fa8e0" strokeWidth="1.500" /></Svg> },
  { ml: 14, node: <Svg width="18" height="16" viewBox="0 0 18 16"><rect width="18" height="16" rx="2" fill={IC} /><path d="M3 4h12M3 7.500h12M3 11h12" stroke="#fff" strokeDasharray="2 1" strokeWidth="1.300" /></Svg> },
  { ml: 13, node: <Svg width="19" height="20" viewBox="0 0 19 20"><circle cx="8" cy="5" r="5" fill={IC} /><path d="M0 20c0-11 16-11 16 0z" fill={IC} /><rect x="9" y="12" width="10" height="8" fill="#fff" /><text x="10" y="19.500" fontSize="8" fontWeight="700" fill={IC} fontFamily="Liberation Sans">61</text></Svg> },
  { ml: 9, node: <Svg width="23" height="24" viewBox="0 0 23 24"><path d="M0 8l6-4h10l5 4-3 4-2-1v12H6V11l-3 1z" fill="#a66be8" /><circle cx="19" cy="3" r="3.500" fill="#f0641e" /></Svg> },
  { ml: 7.5, node: <Svg width="19" height="17" viewBox="0 0 19 17"><path d="M5 1h9c3 0 5 5 5 11 0 5-4 4-6 1H6c-2 3-6 4-6-1C0 6 2 1 5 1z" fill={IC} /><circle cx="6" cy="7" r="1.500" fill="#fff" /><circle cx="13" cy="7" r="1.500" fill="#fff" /></Svg> },
  { ml: 12.5, node: <Svg width="17" height="17" viewBox="0 0 17 17"><rect width="7.500" height="7.500" rx="2.500" fill={IC} /><rect x="9.500" width="7.500" height="7.500" rx="3.700" fill={IC} /><rect y="9.500" width="7.500" height="7.500" rx="2.500" fill={IC} /><rect x="9.500" y="9.500" width="7.500" height="7.500" rx="2.500" fill={IC} /></Svg> },
];

/* ---------- data ---------- */
const tabs: [string, number][] = [
  ['文件', 65], ['开始', 61], ['插入', 61], ['页面布局', 95], ['公式', 60], ['数据', 62.6], ['审阅', 60], ['视图', 61.4],
  ['开发工具', 95], ['帮助', 61], ['方方格子', 96.5], ['DIY工具箱', 110], ['Power Pivot', 100],
];
const columns = 'ABCDEFGHIJKLMNOPQRSTUV'.split('');
const rows = Array.from({ length: 30 }, (_, i) => i + 1);
const content: Record<string, string> = {
  A1: 'A', B1: 'B', A2: 'C', B2: 'D', A3: 'E', B3: 'F', D1: 'B【A】+D【C】+F【E】',
};
const sheets: [string, number][] = [
  ['计算0点后运营时长', 170], ['数据透视表日期无法按月汇总', 244], ['提取最大值到对应区域', 193], ['数字日期截止今天月数', 193],
];

export default function App() {
  return (
    <Page>
      <Global />
      <TitleBar>
        <Pattern width="1919" height="43" viewBox="0 0 1919 43">
          <rect x="722" y="0" width="375" height="2" fill="#185a3c" />
          <rect x="1425" y="0" width="300" height="2" fill="#185a3c" />
          <g fill="none" stroke="#195f40" strokeWidth="3" opacity=".8">
            <circle cx="1305" cy="18" r="5" /><path d="M1310 18h110" /><circle cx="1335" cy="50" r="18" /><path d="M1390 43l12-7h180" />
            <path d="M1640 3h60l30 20-14 20M1780 43l40-30h70l25-13" />
          </g>
        </Pattern>
        <TitleItem $ml={26.5} $w={59}>自动保存</TitleItem>
        <TitleItem $ml={8.5}><Toggle><ToggleDot />关</Toggle></TitleItem>
        <TitleItem $ml={16}><SaveI /></TitleItem>
        <TitleItem $ml={16}><UndoI /></TitleItem>
        <TitleItem $ml={8} $w={8}><Chev c="#fff" /></TitleItem>
        <TitleItem $ml={14}><UndoI flip o={0.35} /></TitleItem>
        <TitleItem $ml={8} $w={8}><Chev c="#6fa48a" /></TitleItem>
        <TitleItem $ml={15}><PreviewI /></TitleItem>
        <TitleItem $ml={20}><CustomI /></TitleItem>
        <TitleItem $ml={534} $w={158}>山竹Excel表格教学.xlsx</TitleItem>
        <TitleItem $ml={6} $w={12}><Chev c="#fff" /></TitleItem>
        <TitleItem $ml={372}><SearchI /></TitleItem>
        <TitleItem $ml={46} $w={94}>山竹 表格教学</TitleItem>
        <TitleItem $ml={11}><Avatar><AvatarArt /></Avatar></TitleItem>
        <TitleItem $ml={35.5}><DiamondI /></TitleItem>
        <TitleItem $ml={39.5}><DisplayI /></TitleItem>
        <TitleItem $ml={43}><MinI /></TitleItem>
        <TitleItem $ml={43}><RestoreI /></TitleItem>
        <TitleItem $ml={43}><CloseI /></TitleItem>
      </TitleBar>

      <TabRow>
        {tabs.map(([t, w]) => <Tab key={t} $w={w} $active={t === '开始'}>{t}</Tab>)}
        <TabActions>
          <ActionButton $w={67.5}><CommentI />批注</ActionButton>
          <ActionButton $w={79}><ShareI />共享<Chev /></ActionButton>
        </TabActions>
      </TabRow>

      <Ribbon>
        <Group $w={158.4}>
          <GroupBody $pl={18}>
            <BigCmd $w={38} $muted>
              <BigIcon><Paste /></BigIcon>
              <BigLine>粘贴</BigLine>
              <BigLine><Chev c="#aaa" /></BigLine>
            </BigCmd>
            <SmallList $ml={8} $h={30}>
              <SmallCmd><SmallIcon $w={26}><Place $ml={6}><ScissorsI /></Place></SmallIcon>剪切</SmallCmd>
              <SmallCmd><SmallIcon $w={26}><Place $ml={2}><CopyI /></Place></SmallIcon>复制<Place $ml={12}><Chev /></Place></SmallCmd>
              <SmallCmd><SmallIcon $w={26}><Place $ml={2}><BrushI /></Place></SmallIcon>格式刷</SmallCmd>
            </SmallList>
          </GroupBody>
          <GroupFoot><GroupName>剪贴板</GroupName><Launcher><LauncherI /></Launcher></GroupFoot>
        </Group>

        <Group $w={344}>
          <GroupBody $pl={11}>
            <ToolStack>
              <ToolRow>
                <Select $w={212}>等线<Chev /></Select>
                <Select $w={49} $ml={3}>11<Chev /></Select>
                <Place $ml={7} $w={22}><GrowGlyph $s={24}>A</GrowGlyph><Tri dir="u" s={6} c="#2a78c4" /></Place>
                <Place $ml={10} $w={20}><GrowGlyph $s={20}>A</GrowGlyph><Tri dir="d" s={6} c="#2a78c4" /></Place>
              </ToolRow>
              <ToolRow>
                <Place $w={28}><BoldGlyph>B</BoldGlyph></Place>
                <Place $w={29}><ItalicGlyph>I</ItalicGlyph></Place>
                <Place $w={31}><UnderGlyph>U</UnderGlyph></Place>
                <Place $w={14}><Chev /></Place>
                <Sep $ml={5} />
                <Place $ml={6} $w={19}><BordersI /></Place>
                <Place $w={26}><Chev /></Place>
                <Sep />
                <Place $ml={5} $w={20}><FillI /></Place>
                <Place $w={25}><Chev /></Place>
                <Place $ml={4} $w={20}><FontColorI /></Place>
                <Place $w={24}><Chev /></Place>
                <Sep />
                <Place $ml={7} $w={18}><Ruby>wén<RubyHan>文</RubyHan></Ruby></Place>
                <Place $w={27}><Chev /></Place>
              </ToolRow>
            </ToolStack>
          </GroupBody>
          <GroupFoot><GroupName>字体</GroupName><Launcher><LauncherI /></Launcher></GroupFoot>
        </Group>

        <Group $w={318}>
          <GroupBody $pl={9.6}>
            <ToolStack>
              <ToolRow>
                <Place $w={30}><Lines kind="top" y={-2} /></Place>
                <Place $w={30}><Lines kind="mid" y={2} /></Place>
                <Place $w={30}><Selected><Lines kind="bot" y={4} /></Selected></Place>
                <Sep />
                <Place $w={32}><Orient /></Place>
                <Place $w={6}><Chev /></Place>
                <Sep $ml={24.5} />
                <Place $ml={9.5}><WrapI /></Place>
                <WrapText $ml={4}>自动换行</WrapText>
              </ToolRow>
              <ToolRow>
                <Place $w={30}><Lines kind="l" /></Place>
                <Place $w={30}><Lines kind="c" /></Place>
                <Place $w={30}><Lines kind="r" /></Place>
                <Sep />
                <Place $w={32}><Indent out /></Place>
                <Place $w={28}><Indent /></Place>
                <Sep $ml={2.5} />
                <Place $ml={6.5}><MergeI /></Place>
                <WrapText $ml={5}>合并后居中</WrapText>
                <Place $ml={13}><Chev /></Place>
              </ToolRow>
            </ToolStack>
          </GroupBody>
          <GroupFoot><GroupName>对齐方式</GroupName><Launcher><LauncherI /></Launcher></GroupFoot>
        </Group>

        <Group $w={194}>
          <GroupBody $pl={10.6}>
            <ToolStack>
              <ToolRow><Select $w={173.5}>常规<Chev /></Select></ToolRow>
              <ToolRow>
                <Place $ml={4}><CurrencyI /></Place>
                <Place $ml={7}><Chev /></Place>
                <Place $ml={13} $w={19}><Percent>%</Percent></Place>
                <Place $ml={16.6}><Comma /></Place>
                <Sep $ml={9} />
                <Place $ml={5.4}><DecI /></Place>
                <Place $ml={11}><DecI more /></Place>
              </ToolRow>
            </ToolStack>
          </GroupBody>
          <GroupFoot><GroupName>数字</GroupName><Launcher><LauncherI /></Launcher></GroupFoot>
        </Group>

        <Group $w={244.5}>
          <GroupBody $pl={9.7}>
            <BigCmd $w={68}>
              <BigIcon><CondI /></BigIcon><BigLine>条件格式</BigLine><BigLine><Chev /></BigLine>
            </BigCmd>
            <BigCmd $w={76}>
              <BigIcon><TableStyleI /></BigIcon><BigLine>套用</BigLine><BigLine>表格格式<Chev /></BigLine>
            </BigCmd>
            <BigCmd $w={84}>
              <BigIcon><CellStyleI /></BigIcon><BigLine>单元格样式</BigLine><BigLine><Chev /></BigLine>
            </BigCmd>
          </GroupBody>
          <GroupFoot><GroupName>样式</GroupName></GroupFoot>
        </Group>

        <Group $w={175.7}>
          <GroupBody $pl={10.2}>
            <BigCmd $w={52}><BigIcon><InsertI /></BigIcon><BigLine>插入</BigLine><BigLine><Chev /></BigLine></BigCmd>
            <BigCmd $w={52}><BigIcon><DeleteI /></BigIcon><BigLine>删除</BigLine><BigLine><Chev /></BigLine></BigCmd>
            <BigCmd $w={52}><BigIcon><FormatI /></BigIcon><BigLine>格式</BigLine><BigLine><Chev /></BigLine></BigCmd>
          </GroupBody>
          <GroupFoot><GroupName>单元格</GroupName></GroupFoot>
        </Group>

        <Group $w={296.7}>
          <GroupBody $pl={14.5}>
            <SmallList $h={29} $wd={112.5}>
              <SmallCmd><SmallIcon $w={24.5}><SigmaI /></SmallIcon>自动求和<Place $ml={12}><Chev /></Place></SmallCmd>
              <SmallCmd><SmallIcon $w={24.5}><FillDown /></SmallIcon>填充<Place $ml={4}><Chev /></Place></SmallCmd>
              <SmallCmd><SmallIcon $w={24.5}><EraserI /></SmallIcon>清除<Place $ml={4}><Chev /></Place></SmallCmd>
            </SmallList>
            <BigCmd $w={80}><BigIcon><SortI /></BigIcon><BigLine>排序和筛选</BigLine><BigLine><Chev /></BigLine></BigCmd>
            <BigCmd $w={80}><BigIcon><FindI /></BigIcon><BigLine>查找和选择</BigLine><BigLine><Chev /></BigLine></BigCmd>
          </GroupBody>
          <GroupFoot><GroupName>编辑</GroupName></GroupFoot>
        </Group>

        <Group $w={72.3}>
          <GroupBody $pl={0}>
            <BigCmd $w={72}><BigIcon><AddinI /></BigIcon><BigLine>加</BigLine><BigLine>载项</BigLine></BigCmd>
          </GroupBody>
          <GroupFoot><GroupName>加载项</GroupName></GroupFoot>
        </Group>

        <Group $w={71.8}>
          <GroupBody $pl={0}>
            <BigCmd $w={72}><BigIcon><AnalyzeI /></BigIcon><BigLine>分析</BigLine><BigLine>数据</BigLine></BigCmd>
          </GroupBody>
        </Group>

        <Collapse><Svg width="14" height="8" viewBox="0 0 14 8"><path d="M1 7l6-6 6 6" fill="none" stroke="#444" strokeWidth="1.200" /></Svg></Collapse>
      </Ribbon>

      <FormulaBar>
        <NameBox>J12<Tri dir="d" s={9} c="#555" /></NameBox>
        <Handle><i /><i /><i /></Handle>
        <FxBox>
          <Svg width="15" height="15" viewBox="0 0 15 15"><path d="M1 1l13 13M14 1L1 14" stroke="#aaa" strokeWidth="1.800" /></Svg>
          <Svg width="17" height="15" viewBox="0 0 17 15"><path d="M1 8l5 6L16 1" fill="none" stroke="#aaa" strokeWidth="1.800" /></Svg>
          <FxMark>fx</FxMark>
        </FxBox>
        <FormulaInput><Svg width="11" height="8" viewBox="0 0 11 8"><path d="M1 1l4.500 4.500L10 1M1 3.500l4.500 4L10 3.500" fill="none" stroke="#666" strokeWidth="1.200" /></Svg></FormulaInput>
      </FormulaBar>

      <SheetWrap>
        <Sheet>
          <Corner><Svg width="15" height="15" viewBox="0 0 15 15"><path d="M15 0v15H0z" fill="#b9b9b9" /></Svg></Corner>
          {columns.map(c => <ColHead key={c} $sel={c === 'J'} $clip={c === 'V'}>{c}</ColHead>)}
          {rows.map(r => (
            <React.Fragment key={r}>
              <RowHead $sel={r === 12}>{r}</RowHead>
              {columns.map(c => <Cell key={c} $sel={c === 'J' && r === 12}>{content[c + r]}</Cell>)}
            </React.Fragment>
          ))}
        </Sheet>
        <VScroll>
          <ScrollBtn><Tri dir="u" /></ScrollBtn>
          <Thumb />
          <DownBtn><Tri dir="d" /></DownBtn>
        </VScroll>
      </SheetWrap>

      <TabBar>
        <TabNav><Tri dir="l" s={10} c="#1f6b48" /><Tri dir="r" s={10} c="#999" />…</TabNav>
        {sheets.map(([t, w]) => (
          <React.Fragment key={t}>
            <TabDivider />
            <SheetTab $w={w}>{t}</SheetTab>
          </React.Fragment>
        ))}
        <SheetTab $w={159} $active>两列数据左右合并</SheetTab>
        <AddSheet><Svg width="11" height="11" viewBox="0 0 11 11"><path d="M5.500 0v11M0 5.500h11" stroke="#666" strokeWidth="1.300" /></Svg></AddSheet>
        <BarHandle><i /><i /><i /></BarHandle>
        <HScroll>
          <HBtn><Tri dir="l" /></HBtn>
          <HTrack />
          <HBtn $ml={15}><Tri dir="r" /></HBtn>
        </HScroll>
      </TabBar>

      <StatusBar>
        就绪
        <StatusNote>辅助功能: 调查</StatusNote>
        <ViewCell>
          <Svg width="17" height="17" viewBox="0 0 17 17"><path d="M.5.500h16v16H.5zM4.500.500v16M8.500.500v16M12.500.500v16M.5 4.500h16M.5 8.500h16M.5 12.500h16" fill="none" stroke="#555" /></Svg>
        </ViewCell>
      </StatusBar>

      <Taskbar>
        <Place $ml={20}><WinI /></Place>
        <Place $ml={40}><ChromeI /></Place>
        <ExcelTile><ExcelI /></ExcelTile>
        {tray.map((t, i) => <Place key={i} $ml={t.ml}>{t.node}</Place>)}
        <Clock><span>22:05</span><span>2024/5/23</span></Clock>
      </Taskbar>

      <ImeBar>
        <Place $w={40}><SogouMark s={38} /></Place>
        {ime.map((t, i) => <Place key={i} $ml={t.ml}>{t.node}</Place>)}
      </ImeBar>

      <Spot>
        <Svg width="16" height="16" viewBox="0 0 16 16"><path d="M5 .500h6v4.500h4.500v6H11v4.500H5V11H.5V5H5z" fill="#fff" stroke="#000" /></Svg>
      </Spot>
      <Headline>
        <div>左右合并后</div>
        <HeadLine2>相加链接内容</HeadLine2>
      </Headline>
      <KeyHint>Ctrl+4</KeyHint>
    </Page>
  );
}
